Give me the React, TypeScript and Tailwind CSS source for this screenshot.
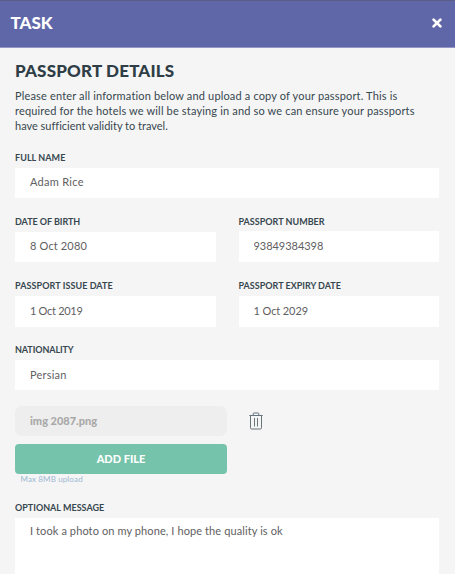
import type { ReactNode } from "react";

interface FieldProps {
  id: string;
  label: string;
  value: string;
  labelClass?: string;
  valueClass?: string;
  className?: string;
}

function Label({ id, className = "h-[18px]", children }: { id: string; className?: string; children: ReactNode }) {
  return (
    <label
      htmlFor={id}
      className={`block pt-px text-[9px] leading-[14px] font-bold whitespace-nowrap text-[#37474f] uppercase ${className}`}
    >
      {children}
    </label>
  );
}

function Field({ id, label, value, labelClass, valueClass = "", className = "" }: FieldProps) {
  return (
    <div className={className}>
      <Label id={id} className={labelClass}>
        {label}
      </Label>
      <input
        id={id}
        type="text"
        defaultValue={value}
        className={`block w-full bg-white px-[15px] text-[11px] text-[#5f6062] outline-none ${valueClass}`}
      />
    </div>
  );
}

function CloseIcon() {
  return (
    <svg width="10" height="10" viewBox="0 0 10 10" fill="none" stroke="currentColor" strokeWidth="2.7" strokeLinecap="round">
      <path d="M1.6 1.6 8.4 8.4M8.4 1.6 1.6 8.4" />
    </svg>
  );
}

function TrashIcon() {
  return (
    <svg width="14" height="18" viewBox="0 0 14 18" fill="none" stroke="currentColor" strokeWidth="1">
      <path d="M0.3 3.5h13.4" />
      <path d="M4.2 3.2V1.7q0-.7.7-.7h4.2q.7 0 .7.7v1.5" />
      <path d="M1.5 4v11.8q0 1.2 1.2 1.2h8.6q1.2 0 1.2-1.2V4" />
      <path d="M5.5 6v8.5M8.5 6v8.5" />
    </svg>
  );
}

export default function App() {
  return (
    <div className="h-[574px] w-[455px] overflow-hidden bg-[#f5f5f5] font-['Lato',sans-serif]">
      <header className="flex h-12 items-center justify-between border-t border-b border-t-[#5c5c85] border-b-[#9497c6] bg-[#6067a9] pr-[13.5px] pb-[3px] pl-[10.5px] text-white">
        <h2 className="text-[17px] leading-5 font-black">TASK</h2>
        <button type="button" aria-label="Close">
          <CloseIcon />
        </button>
      </header>

      <main className="pr-4 pl-[15px]">
        <h1 className="pt-[13px] text-[17px] leading-5 font-black tracking-[0.18px] whitespace-nowrap text-[#2f3e46]">
          PASSPORT DETAILS
        </h1>
        <p className="mt-[7px] text-[11px] leading-[15.2px] whitespace-nowrap text-[#37474f]">
          <span className="block tracking-[0.16px]">
            Please enter all information below and upload a copy of your passport. This is
          </span>
          <span className="block tracking-[0.16px]">
            required for the hotels we will be staying in and so we can ensure your passports
          </span>
          <span className="block tracking-[-0.01px]">have sufficient validity to travel.</span>
        </p>

        <form className="mt-[16px]">
          <Field
            id="name"
            label="Full name"
            value="Adam Rice"
            labelClass="h-[18px] tracking-[0.05px]"
            valueClass="h-[30px] pb-[2px] tracking-[0.28px]"
          />

          <div className="mt-4 grid grid-cols-[201px_200px] gap-x-[23px]">
            <Field
              id="dob"
              label="Date of birth"
              value="8 Oct 2080"
              labelClass="h-[18px] tracking-[-0.05px]"
              valueClass="h-[30px] pb-[2px] tracking-[0.15px]"
            />
            <Field
              id="number"
              label="Passport number"
              value="93849384398"
              labelClass="h-[17px] -indent-[0.5px]"
              valueClass="h-[31px] pb-[2px] -indent-[0.5px] tracking-[-0.04px]"
            />
          </div>

          <div className="mt-4 grid grid-cols-[201px_200px] gap-x-[23px]">
            <Field
              id="issued"
              label="Passport issue date"
              value="1 Oct 2019"
              labelClass="h-[18px] tracking-[0.07px]"
              valueClass="h-[31px] pb-px tracking-[-0.3px]"
            />
            <Field
              id="expires"
              label="Passport expiry date"
              value="1 Oct 2029"
              labelClass="h-[18px] -indent-[0.5px]"
              valueClass="h-[31px] pb-px -indent-[0.5px] tracking-[-0.1px]"
            />
          </div>

          <Field
            id="nationality"
            label="Nationality"
            value="Persian"
            labelClass="h-[18px] tracking-[-0.1px]"
            valueClass="h-[30px] pb-px tracking-[0.2px]"
            className="mt-[15px]"
          />

          <div className="mt-4 flex items-center gap-[22px]">
            <div className="flex h-[30px] w-[212px] items-center rounded-[7px] bg-[#eeeeee] px-[15px] pt-px text-[11px] font-black text-[#a9a9a9]">
              img 2087.png
            </div>
            <button type="button" aria-label="Delete file" className="text-[#66747b]">
              <TrashIcon />
            </button>
          </div>
          <button
            type="button"
            className="mt-2 block h-[30.5px] w-[212px] rounded-[4px] bg-[#75c3aa] text-[11px] font-black text-white"
          >
            ADD FILE
          </button>
          <p className="h-[25.5px] pl-[5.5px] text-[8px] leading-[10px] tracking-[0.13px] text-[#9db8d2]">Max 8MB upload</p>

          <Label id="message">Optional message</Label>
          <textarea
            id="message"
            defaultValue="I took a photo on my phone, I hope the quality is ok"
            className="block h-[80px] w-full resize-none bg-white px-[15px] pt-[5px] text-[11px] leading-[15px] tracking-[0.1px] text-[#5f6062] outline-none"
          />
        </form>
      </main>
    </div>
  );
}
